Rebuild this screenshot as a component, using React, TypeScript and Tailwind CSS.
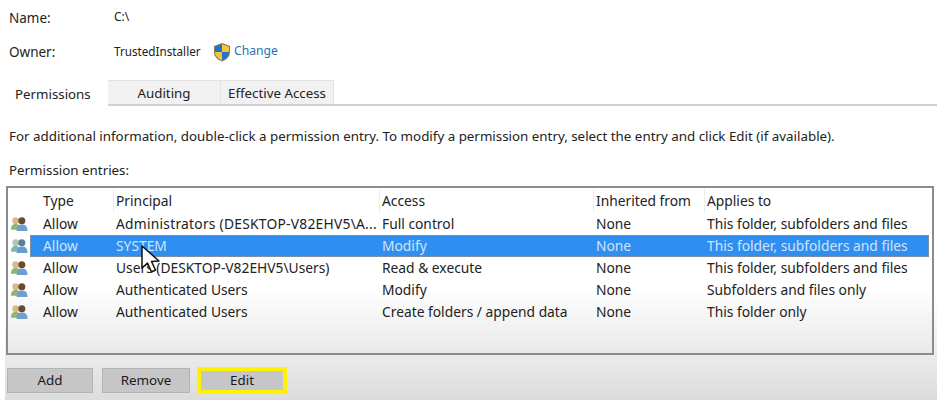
const FONT = "font-['Noto_Sans',sans-serif]"

type Entry = {
  type: string
  principal: string
  access: string
  inherited: string
  applies: string
  selected?: boolean
}

const ENTRIES: Entry[] = [
  { type: 'Allow', principal: 'Administrators (DESKTOP-V82EHV5\\A...', access: 'Full control', inherited: 'None', applies: 'This folder, subfolders and files' },
  { type: 'Allow', principal: 'SYSTEM', access: 'Modify', inherited: 'None', applies: 'This folder, subfolders and files', selected: true },
  { type: 'Allow', principal: 'Users (DESKTOP-V82EHV5\\Users)', access: 'Read & execute', inherited: 'None', applies: 'This folder, subfolders and files' },
  { type: 'Allow', principal: 'Authenticated Users', access: 'Modify', inherited: 'None', applies: 'Subfolders and files only' },
  { type: 'Allow', principal: 'Authenticated Users', access: 'Create folders / append data', inherited: 'None', applies: 'This folder only' },
]

const CELLS = 'grid grid-cols-[86px_266px_214px_111px_1fr] items-center'

function Shield() {
  return (
    <svg width="18" height="20" viewBox="0 0 18 20">
      <path d="M9 1 L17 4 V10 C17 15 13 18 9 19.5 C5 18 1 15 1 10 V4 Z" fill="#8a7a55" />
      <path d="M9 2.2 V10 H2 V4.8 Z" fill="#1f74d0" />
      <path d="M9 2.2 L16 4.8 V10 H9 Z" fill="#f7c531" />
      <path d="M2 10 H9 V18.2 C5.5 16.8 2.3 14.5 2 10 Z" fill="#f7c531" />
      <path d="M9 10 H16 C15.7 14.5 12.5 16.8 9 18.2 Z" fill="#1f74d0" />
    </svg>
  )
}

function Users({ dim }: { dim?: boolean }) {
  return (
    <svg width="18" height="16" viewBox="0 0 19 16" className={dim ? 'opacity-80' : ''}>
      <circle cx="6" cy="4.5" r="3.6" fill={dim ? '#9fb7a0' : '#d9b98a'} />
      <path d="M1 14 C1 9.5 3 8 6 8 C9 8 11 9.5 11 14 Z" fill={dim ? '#5fa59a' : '#8fb86a'} />
      <circle cx="12.5" cy="4.5" r="3.7" fill={dim ? '#2f5f7f' : '#6b4a32'} />
      <path d="M7 15.5 C7 10 9 8.5 12.5 8.5 C16 8.5 18.5 10 18.5 15.5 Z" fill={dim ? '#3f86c4' : '#6f9fcf'} />
    </svg>
  )
}

function Cursor() {
  return (
    <svg width="26" height="30" viewBox="0 0 26 30" className="absolute left-[132px] top-[57px]">
      <path d="M2 1 V23 L7.5 18 L11.5 27 L15.5 25 L11.5 16.5 L19 16 Z" fill="#fff" stroke="#111" strokeWidth="1.5" strokeLinejoin="round" />
    </svg>
  )
}

function Button({ label, width, highlight }: { label: string; width: string; highlight?: boolean }) {
  return (
    <div
      className={
        highlight
          ? `flex h-[27px] items-center justify-center border-[4px] border-[#fff200] bg-[#c6c5c8] text-[13.4px] text-[#1a1a1a] ${width}`
          : `flex h-[25px] items-center justify-center border border-[#b4b4b4] bg-[#c6c5c8] text-[13.4px] text-[#1a1a1a] ${width}`
      }
    >
      {label}
    </div>
  )
}

export default function App() {
  return (
    <div className={`${FONT} flex h-[405px] w-[943px] flex-col overflow-hidden bg-white text-[#222]`}>
      <div className="flex h-[34px] items-center pl-[9px] pt-[2px]">
        <span className="w-[105px] text-[13.5px]">Name:</span>
        <span className="-mt-[2px] text-[12px]">C:\</span>
      </div>
      <div className="flex h-[36px] items-center pl-[9px] pt-[1px]">
        <span className="w-[105px] text-[13.5px]">Owner:</span>
        <span className="-mt-[2px] w-[99px] text-[11.7px]">TrustedInstaller</span>
        <span className="-mt-[2px]"><Shield /></span>
        <span className="-mt-[2px] ml-[3px] text-[12.2px] text-[#2a72b5]">Change</span>
      </div>

      <div className="ml-[5px] mt-[10px] flex h-[26px] w-[932px] border-b-2 border-[#d0d0d0] text-[13.3px]">
        <div className="-mb-[2px] flex h-[27px] w-[103px] items-center bg-white pl-[10px] pt-[3px]">Permissions</div>
        <div className="flex w-[112px] items-center justify-center border-t border-[#e2e2e2] bg-[#f1f1f1] pt-[3px]">Auditing</div>
        <div className="flex w-[114px] items-center justify-center border-l border-t border-r border-[#e2e2e2] bg-[#f1f1f1] pt-[3px]">Effective Access</div>
      </div>

      <div className="ml-[5px] flex h-[294px] w-[932px] flex-col bg-gradient-to-b from-white from-[65%] to-[#dcdcdc] px-[1px]">
        <p className="mt-[20px] pl-[3px] text-[13.35px] leading-[20px] whitespace-nowrap">
          For additional information, double-click a permission entry. To modify a permission entry, select the entry and click Edit (if available).
        </p>
        <p className="mt-[14px] pl-[3px] text-[13.35px] leading-[20px]">Permission entries:</p>

        <div className="relative mt-[6px] h-[169px] w-[928px] border-2 border-[#8c8c8c] bg-gradient-to-b from-white from-[60%] to-[#e9e9e9] text-[13.8px]">
          <div className="flex h-[25px] items-center pl-[22px] pr-[3px] pt-[1px]">
            <div className={`${CELLS} h-[24px] flex-1`}>
              <span className="h-full pl-[13px] leading-[24px]">Type</span>
              <span className="-ml-[3px] h-full border-l border-[#ececec] pl-[2px] leading-[24px]">Principal</span>
              <span className="-ml-[3px] h-full border-l border-[#ececec] pl-[2px] leading-[24px]">Access</span>
              <span className="-ml-[3px] h-full border-l border-[#ececec] pl-[2px] leading-[24px]">Inherited from</span>
              <span className="-ml-[3px] h-full border-l border-[#ececec] pl-[2px] leading-[24px]">Applies to</span>
            </div>
          </div>
          {ENTRIES.map((e, i) => (
            <div key={i} className="flex h-[22px] items-center pr-[3px]">
              <span className="flex w-[22px] justify-center"><Users dim={e.selected} /></span>
              <div className={e.selected ? `${CELLS} h-[22px] flex-1 bg-[#2f8ff0] pt-[1px] text-[#cfe4fb] shadow-[inset_0_0_0_1px_#7f8fa3]` : `${CELLS} h-[22px] flex-1 pt-[1px]`}>
                <span className="pl-[13px]">{e.type}</span>
                <span className={i === 0 ? 'tracking-[0.25px] whitespace-nowrap' : 'whitespace-nowrap'}>{e.principal}</span>
                <span>{e.access}</span>
                <span>{e.inherited}</span>
                <span>{e.applies}</span>
              </div>
            </div>
          ))}
          <Cursor />
        </div>

        <div className="mt-[12px] flex items-center pl-[1px]">
          <Button label="Add" width="w-[86px]" />
          <div className="w-[9px]" />
          <Button label="Remove" width="w-[88px]" />
          <div className="w-[7px]" />
          <Button label="Edit" width="w-[90px]" highlight />
        </div>
      </div>
    </div>
  )
}
